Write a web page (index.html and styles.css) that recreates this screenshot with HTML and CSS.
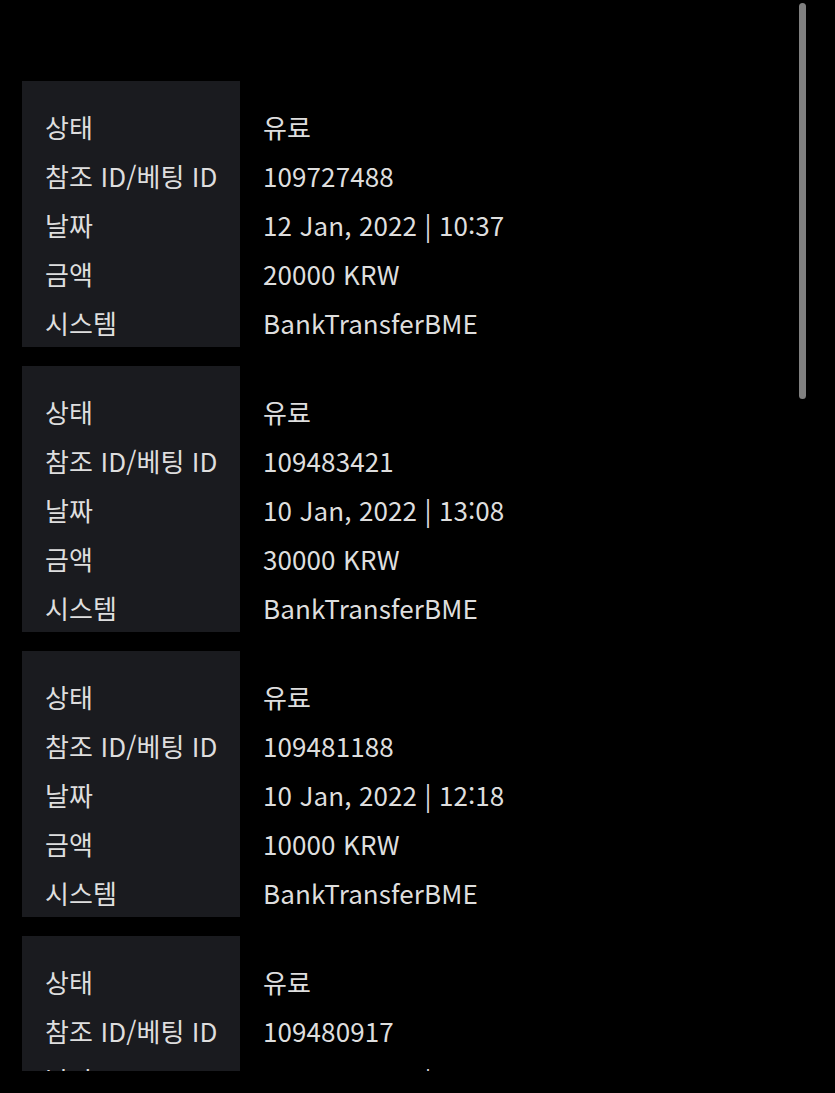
FILE: index.html
```html
<!DOCTYPE html>
<html lang="ko">
<head>
  <meta charset="UTF-8">
  <meta name="viewport" content="width=device-width, initial-scale=1.0">
  <title>입금 내역</title>
  <link rel="stylesheet" href="styles.css">
</head>
<body>
  <div class="history">
    <div class="record">
      <div class="labels">
        <div class="row">상태</div>
        <div class="row">참조 ID/베팅 ID</div>
        <div class="row">날짜</div>
        <div class="row">금액</div>
        <div class="row">시스템</div>
      </div>
      <div class="values">
        <div class="row">유료</div>
        <div class="row">109727488</div>
        <div class="row">12 Jan, 2022 | 10:37</div>
        <div class="row">20000 KRW</div>
        <div class="row">BankTransferBME</div>
      </div>
    </div>

    <div class="record">
      <div class="labels">
        <div class="row">상태</div>
        <div class="row">참조 ID/베팅 ID</div>
        <div class="row">날짜</div>
        <div class="row">금액</div>
        <div class="row">시스템</div>
      </div>
      <div class="values">
        <div class="row">유료</div>
        <div class="row">109483421</div>
        <div class="row">10 Jan, 2022 | 13:08</div>
        <div class="row">30000 KRW</div>
        <div class="row">BankTransferBME</div>
      </div>
    </div>

    <div class="record">
      <div class="labels">
        <div class="row">상태</div>
        <div class="row">참조 ID/베팅 ID</div>
        <div class="row">날짜</div>
        <div class="row">금액</div>
        <div class="row">시스템</div>
      </div>
      <div class="values">
        <div class="row">유료</div>
        <div class="row">109481188</div>
        <div class="row">10 Jan, 2022 | 12:18</div>
        <div class="row">10000 KRW</div>
        <div class="row">BankTransferBME</div>
      </div>
    </div>

    <div class="record">
      <div class="labels">
        <div class="row">상태</div>
        <div class="row">참조 ID/베팅 ID</div>
        <div class="row">날짜</div>
        <div class="row">금액</div>
        <div class="row">시스템</div>
      </div>
      <div class="values">
        <div class="row">유료</div>
        <div class="row">109480917</div>
        <div class="row">10 Jan, 2022 | 12:04</div>
        <div class="row">10000 KRW</div>
        <div class="row">BankTransferBME</div>
      </div>
    </div>

    <div class="scroll-thumb"></div>
  </div>
</body>
</html>
```

FILE: styles.css
```css
:root {
  --background: #000000;
  --label-bg: #1a1b1f;
  --text: #dedede;
  --thumb: #808080;
}

* {
  margin: 0;
  padding: 0;
  box-sizing: border-box;
}

body {
  font-family: 'Noto Sans CJK KR', 'Noto Sans', sans-serif;
  background-color: var(--background);
  color: var(--text);
  font-size: 26px;
}

.history {
  position: relative;
  height: 1071px;
  overflow: hidden;
  padding: 81px 0 0 22px;
  display: flex;
  flex-direction: column;
  gap: 19px;
}

.record {
  display: grid;
  grid-template-columns: 218px 1fr;
  flex-shrink: 0;
}

.labels {
  background-color: var(--label-bg);
  padding: 21px 0 0 23px;
}

.values {
  padding: 21px 0 0 23px;
}

.row {
  height: 49px;
  line-height: 49px;
  white-space: nowrap;
  letter-spacing: 0.1px;
}

.scroll-thumb {
  position: absolute;
  top: 3px;
  left: 799px;
  width: 7px;
  height: 396px;
  border-radius: 4px;
  background-color: var(--thumb);
}
```
